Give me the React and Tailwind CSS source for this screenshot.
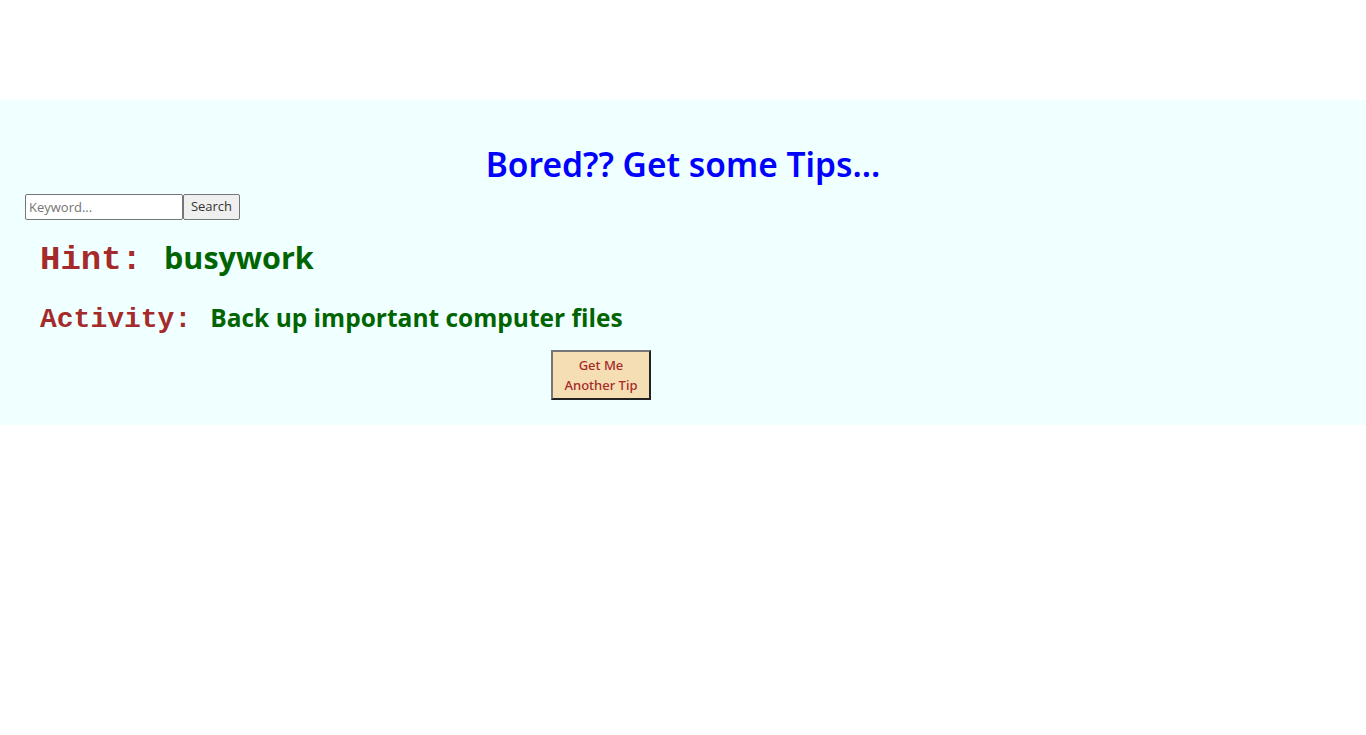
export default function App() {
  return (
    <div className="min-h-[735px] bg-white" style={{ fontFamily: '"Open Sans", sans-serif' }}>
      <div className="h-[100px]" />
      <div className="h-[325px] bg-[#f0ffff] px-[25px] pt-[40px]">
        <h1 className="text-center text-[33.5px] leading-[49px] text-[#0000ff] font-semibold" style={{ fontFamily: '"Noto Sans", sans-serif' }}>
          Bored?? Get some Tips...
        </h1>
        <div className="mt-[5px] flex">
          <input
            type="text"
            placeholder="Keyword..."
            className="h-[26px] w-[158px] border border-[#767676] rounded-[2px] bg-white px-[3px] text-[13px] text-black placeholder:text-[#757575] outline-none"
          />
          <button className="h-[26px] w-[57px] border border-[#767676] rounded-[2px] bg-[#efefef] text-[13px] text-[#333]">
            Search
          </button>
        </div>
        <div className="mt-[17px] flex items-baseline pl-[15px] leading-[41px]">
          <span className="text-[34px] font-bold text-[#a52a2a]" style={{ fontFamily: '"Liberation Mono", monospace' }}>
            Hint:
          </span>
          <span className="ml-[22px] text-[30.5px] font-bold text-[#006400]">busywork</span>
        </div>
        <div className="mt-[19px] flex items-baseline pl-[15px] leading-[36px]">
          <span className="text-[28px] font-bold text-[#a52a2a]" style={{ fontFamily: '"Liberation Mono", monospace' }}>
            Activity:
          </span>
          <span className="ml-[19px] text-[24.5px] font-bold text-[#006400]">Back up important computer files</span>
        </div>
        <div className="mt-[12px] pl-[526px]">
          <button className="h-[50px] w-[100px] border-2 border-t-[#767676] border-l-[#767676] border-r-[#222] border-b-[#222] bg-[#f5deb3] text-[13px] leading-[20px] font-medium text-[#a52a2a]" style={{ fontFamily: '"Noto Sans", sans-serif' }}>
            Get Me
            <br />
            Another Tip
          </button>
        </div>
      </div>
    </div>
  );
}
